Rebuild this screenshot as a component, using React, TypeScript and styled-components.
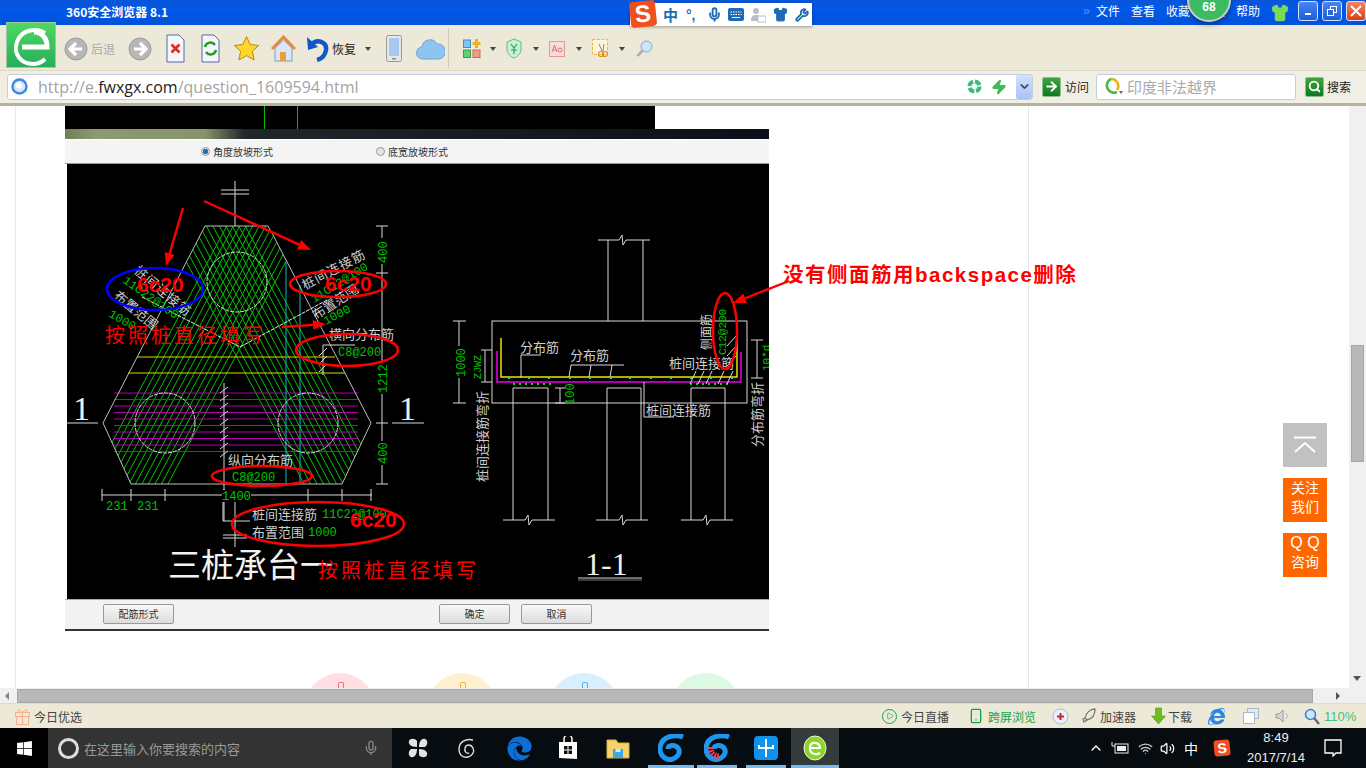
import React from 'react';
import styled, { createGlobalStyle } from 'styled-components';
import { FaWindows, FaEdge, FaInternetExplorer } from 'react-icons/fa';
import { Mic, Wifi, Volume2, ChevronUp, ChevronDown, Wrench, Shirt, Zap, Search, ArrowRight, Smartphone, Play } from 'lucide-react';

const CJK = '"Noto Sans CJK SC", "Liberation Sans", sans-serif';

const Global = createGlobalStyle`
  html, body { margin: 0; padding: 0; overflow: hidden; background: #fff; }
  * { box-sizing: border-box; }
  body { font-family: ${CJK}; font-size: 12px; }
`;

const Screen = styled.div`
  position: relative; width: 1366px; height: 768px; overflow: hidden;
  display: flex; flex-direction: column; background: #fff;
`;
const TitleBar = styled.div`
  height: 25px; flex: none; display: flex; align-items: center; padding-left: 66px;
  background: linear-gradient(#0a55d8 0, #0258e8 8px, #0052dc 100%); color: #fff;
`;
const TitleText = styled.div`font: bold 12px ${CJK}; flex: none; margin-top: -2px;`;
const MenuGroup = styled.div`margin-left: auto; display: flex; align-items: center; height: 25px;`;
const MenuChevron = styled.span`color: #5d8fe8; font: 13px "Liberation Sans", sans-serif; margin-right: 6px; margin-top: -4px;`;
const MenuItem = styled.span`font-size: 12px; width: 35px; flex: none; margin-top: -4px; white-space: nowrap;`;
const WinGroup = styled.div`display: flex; margin-left: 5px;`;
const WinButton = styled.div<{ $red?: boolean }>`
  width: 20px; height: 20px; margin-left: 4px; margin-top: -4px; border: 1px solid #d5e2fa; border-radius: 3px;
  background: ${p => p.$red ? 'linear-gradient(#f0855f,#d9401b)' : 'linear-gradient(#4c85ee,#1a5ddc)'};
  display: flex; align-items: center; justify-content: center;
`;
const ToolBar = styled.div`
  height: 45px; flex: none; background: #ece9d8; display: flex; align-items: center; padding-left: 64px;
`;
const ToolItem = styled.div<{ $w: number }>`
  width: ${p => p.$w}px; flex: none; display: flex; align-items: center; gap: 3px; height: 45px; padding-top: 2px;
`;
const ToolLabel = styled.span<{ $muted?: boolean }>`color: ${p => p.$muted ? '#aaa' : '#222'}; font-size: 12px; white-space: nowrap;`;
const Caret = styled.span<{ $ml: number }>`
  width: 0; height: 0; border-left: 3px solid transparent; border-right: 3px solid transparent;
  border-top: 4px solid #444; flex: none; margin-left: ${p => p.$ml}px;
`;
const ToolSep = styled.div`width: 1px; height: 40px; background: #cfcbb5; flex: none; margin: 0 14px 0 0;`;
const AddressBar = styled.div`
  height: 36px; flex: none; display: flex; align-items: center; padding: 0 0 1px 7px; background: #f1efe3;
  border-top: 1px solid #dcd8c4; border-bottom: 3px solid #b5b2a2;
`;
const UrlField = styled.div`
  width: 1026px; height: 26px; flex: none; background: #fff; border: 1px solid #c3cfe0; border-radius: 3px;
  display: flex; align-items: center; padding-left: 3px;
`;
const UrlText = styled.div`font: 16px "Open Sans", sans-serif; color: #a3a3a3; margin-left: 10px; white-space: nowrap;`;
const UrlHost = styled.span`color: #222;`;
const UrlTail = styled.div`margin-left: auto; display: flex; align-items: center; gap: 9px; height: 24px;`;
const UrlDrop = styled.div`
  width: 16px; height: 24px; background: linear-gradient(#d3e0fb,#a9c2f4); border-radius: 2px;
  display: flex; align-items: center; justify-content: center;
`;
const GreenSquare = styled.div`
  width: 19px; height: 20px; background: linear-gradient(#3da53d,#0c7a22); border-radius: 2px; border: 1px solid #8fbf8f;
  display: flex; align-items: center; justify-content: center; flex: none;
`;
const Visit = styled.div`margin-left: 9px; display: flex; align-items: center; gap: 4px; width: 54px; flex: none; color: #222;`;
const SearchField = styled.div`
  width: 200px; height: 26px; flex: none; background: #fff; border: 1px solid #c3cfe0; border-radius: 3px;
  display: flex; align-items: center; padding-left: 6px; color: #aaa; font-size: 15px;
`;
const SearchGo = styled.div`margin-left: 9px; display: flex; align-items: center; gap: 3px; color: #222;`;
const SearchHint = styled.span`margin-left: 2px; white-space: nowrap;`;
const Middle = styled.div`flex: 1; min-height: 0; display: flex;`;
const Viewport = styled.div`flex: 1; min-width: 0; position: relative; overflow: hidden;`;
const PageColumn = styled.div`
  margin-left: 15px; width: 1014px; height: 100%; border-left: 1px solid #e8e8e8; border-right: 1px solid #e8e8e8;
  padding-left: 49px;
`;
const Figure = styled.div`width: 704px;`;
const TopStrip = styled.div`
  width: 590px; height: 23px;
  background:
    linear-gradient(#00c000,#00c000) 199px 0 / 1px 100% no-repeat,
    linear-gradient(#00c000,#00c000) 232px 0 / 1px 100% no-repeat,
    #000;
`;
const BlurStrip = styled.div`
  height: 10px; background: linear-gradient(90deg,#6f7f58 0,#8b9a70 30px,#87946c 140px,#20262a 180px,#0b1018 100%);
`;
const DialogHead = styled.div`
  height: 25px; display: flex; align-items: center; background: #f4f4f4; border-top: 1px solid #fff; border-bottom: 1px solid #999;
  padding-left: 136px; color: #333; font-size: 10px;
`;
const RadioItem = styled.div<{ $w: number }>`width: ${p => p.$w}px; flex: none; display: flex; align-items: center; gap: 3px;`;
const Radio = styled.span<{ $on?: boolean }>`
  width: 9px; height: 9px; border-radius: 50%; border: 1px solid #999; flex: none;
  background: ${p => p.$on ? 'radial-gradient(#1e6fb0 0 2.5px,#dfe6ea 3px)' : '#e4e4e4'};
`;
const CadWrap = styled.div`padding-left: 2px; height: 435px; background: #fff;`;
const CadSvg = styled.svg`display: block; overflow: visible; background: #000;`;
const DialogFoot = styled.div`
  height: 32px; background: #f2f2f2; border-top: 1px solid #aaa; border-bottom: 2px solid #333;
  display: flex; align-items: center; padding: 0 0 2px 38px;
`;
const DlgBtn = styled.div<{ $ml?: number }>`
  width: 71px; height: 20px; margin-left: ${p => p.$ml ?? 0}px; flex: none; border: 1px solid #999; border-radius: 2px;
  background: linear-gradient(#f8f8f8,#dcdcdc); color: #333; font-size: 10px;
  display: flex; align-items: center; justify-content: center;
`;
const BlobRow = styled.div`display: flex; gap: 52px; margin: 42px 0 0 240px;`;
const Blob = styled.div<{ $c: string; $ic: string }>`
  width: 70px; height: 70px; border-radius: 50%; background: ${p => p.$c}; flex: none; position: relative;
  &::after { content: ''; position: absolute; left: 33px; top: 9px; width: 4px; height: 7px; border: 1px solid ${p => p.$ic}; border-bottom: 0; border-radius: 2px 2px 0 0; }
`;
const FloatStack = styled.div`
  position: absolute; left: 1283px; top: 423px; display: flex; flex-direction: column; gap: 11px;
`;
const FloatBtn = styled.div<{ $gray?: boolean }>`
  width: 44px; height: 44px; background: ${p => p.$gray ? '#c1c1c1' : '#fe6600'}; color: #fff;
  font-size: 14px; line-height: 19px; text-align: center; display: flex; align-items: center; justify-content: center;
  padding-bottom: ${p => p.$gray ? 0 : 6}px;
`;
const QLetters = styled.span`font: 16px "Liberation Sans", sans-serif; letter-spacing: 0;`;
const VScroll = styled.div`
  width: 17px; flex: none; background: #f0f0f0; position: relative;
`;
const VThumb = styled.div`
  position: absolute; left: 2px; top: 239px; width: 13px; height: 117px; background: #b8b8b8; border: 1px solid #a6a6a6;
`;
const ArrowDown = styled.span`
  position: absolute; left: 4px; top: 570px; width: 0; height: 0;
  border-left: 4px solid transparent; border-right: 4px solid transparent; border-top: 5px solid #555;
`;
const HScroll = styled.div`
  height: 16px; flex: none; background: #f0f0f0; display: flex; align-items: center; padding: 0 0 0 5px; border-bottom: 1px solid #dcdcdc;
`;
const HArrow = styled.span<{ $right?: boolean }>`
  width: 0; height: 0; flex: none; border-top: 4px solid transparent; border-bottom: 4px solid transparent;
  ${p => p.$right ? 'border-left: 4px solid #555; margin-left: 23px;' : 'border-right: 4px solid #888; margin-right: 8px;'}
`;
const HThumb = styled.div`width: 1296px; height: 14px; background: #b8b8b8; border: 1px solid #a6a6a6; flex: none;`;
const StatusBar = styled.div`
  height: 24px; flex: none; background: #ece9d8; display: flex; align-items: center; padding-left: 15px; color: #444; font-size: 12px;
`;
const StatusItem = styled.div<{ $ml?: number; $green?: boolean; $gap?: number }>`
  margin-left: ${p => p.$ml ?? 0}px; display: flex; align-items: center; gap: ${p => p.$gap ?? 4}px; flex: none;
  color: ${p => p.$green ? '#17a34a' : '#444'}; white-space: nowrap;
`;
const PlayRing = styled.span`
  width: 15px; height: 15px; border: 1px solid #17a34a; border-radius: 50%; display: flex; align-items: center; justify-content: center; flex: none;
`;
const Zoom = styled.span`color: #45c07a; font: 13px "Liberation Sans", sans-serif;`;
const Taskbar = styled.div`height: 40px; flex: none; background: #070c10; display: flex; align-items: stretch;`;
const StartBtn = styled.div`width: 48px; background: #000; display: flex; align-items: center; justify-content: center; flex: none;`;
const TaskSearch = styled.div`
  width: 344px; flex: none; background: #333; display: flex; align-items: center; padding-left: 10px; color: #999; font-size: 13px;
`;
const Cortana = styled.span`width: 21px; height: 21px; border-radius: 50%; border: 3px solid #ddd; flex: none; margin-right: 5px;`;
const TaskMic = styled.span`margin-left: auto; margin-right: 13px; display: flex; color: #888;`;
const TaskSlot = styled.div<{ $w: number; $ml?: number; $line?: boolean; $active?: boolean }>`
  width: ${p => p.$w}px; margin-left: ${p => p.$ml ?? 0}px; flex: none; display: flex; align-items: center; justify-content: center;
  background: ${p => p.$active ? '#353a3d' : 'transparent'};
  border-bottom: 3px solid ${p => p.$line ? '#76b9ed' : 'transparent'}; padding-top: 3px;
`;
const Tray = styled.div`margin-left: auto; display: flex; align-items: center; color: #fff; flex: none;`;
const TrayItem = styled.div<{ $w: number; $pr?: number }>`
  width: ${p => p.$w}px; padding-right: ${p => p.$pr ?? 0}px; flex: none; display: flex; justify-content: center; align-items: center; font-size: 14px;
`;
const TrayS = styled.span`
  width: 16px; height: 16px; background: #f0501e; border-radius: 3px; transform: rotate(-6deg);
  color: #fff; font: bold 14px/16px "Liberation Sans", sans-serif; text-align: center;
`;
const Clock = styled.div`width: 72px; text-align: center; font: 13px/20px "Liberation Sans", sans-serif; color: #eee; flex: none;`;
const Sogou = styled.div`
  position: absolute; left: 630px; top: 3px; width: 182px; height: 23px; background: #fff; box-shadow: 0 1px 3px rgba(0,0,0,.35);
  display: flex; align-items: center; color: #1e6cb5; padding-left: 33px;
`;
const SogouS = styled.span`
  position: absolute; left: 0; top: -2px; width: 26px; height: 26px; background: #f0501e; border-radius: 4px; transform: rotate(-6deg);
  color: #fff; font: bold 24px/26px "Liberation Sans", sans-serif; text-align: center;
`;
const SogouText = styled.span`font: bold 15px ${CJK}; width: 23px; flex: none;`;
const SogouPunct = styled.span`font: bold 14px "Liberation Sans", sans-serif; width: 17px; flex: none;`;
const SogouIcon = styled.span`width: 22px; flex: none; display: flex; justify-content: center;`;
const Badge = styled.div`
  position: absolute; left: 1187px; top: -22px; width: 44px; height: 44px; border-radius: 50%; background: #3dbb63;
  border: 2px solid #c9cfc9; color: #fff; font: bold 12px "Liberation Sans", sans-serif; display: flex; align-items: flex-end; justify-content: center; padding-bottom: 6px;
  box-shadow: 0 3px 5px rgba(0,0,0,.3);
`;
const Logo360Wrap = styled.div`position: absolute; left: 6px; top: 20px; line-height: 0;`;
const CText = styled.text<{ $c?: string; $s?: number; $b?: boolean; $mono?: boolean; $serif?: boolean; $ls?: number }>`
  fill: ${p => p.$c ?? '#cfcfcf'}; font-size: ${p => p.$s ?? 13}px; font-weight: ${p => p.$b ? 700 : 400};
  font-family: ${p => p.$mono ? '"Liberation Mono", monospace' : p.$serif ? '"Liberation Serif", serif' : p.$b ? '"Liberation Sans", "Noto Sans CJK SC", sans-serif' : CJK};
  letter-spacing: ${p => p.$ls ?? 0}px;
`;

const GR = '#00c400';
const RD = '#ff0000';
const WT = '#d8d8d8';

type TP = { x: number; y: number; r?: number; c?: string; s?: number; mono?: boolean; b?: boolean; serif?: boolean; ls?: number; children: React.ReactNode };
const T = ({ x, y, r, c, s, mono, b, serif, ls, children }: TP) => (
  <CText x={x} y={y} $c={c} $s={s} $mono={mono} $b={b} $serif={serif} $ls={ls} transform={r ? `rotate(${r} ${x} ${y})` : undefined}>{children}</CText>
);
const G = (p: Omit<TP, 'mono' | 'c'>) => <T {...p} mono c={GR} />;

const Hatch = () => {
  const ls: React.ReactNode[] = [];
  const slopes = [0.53, -0.53];
  slopes.forEach((m, i) => {
    for (let o = -40; o <= 40; o += 6.5) {
      const x = 237 + o;
      ls.push(<line key={`${i}${o}`} x1={x + (226 - 282) * m} y1={226} x2={x + (484 - 282) * m} y2={484} stroke={GR} strokeWidth={1} />);
    }
  });
  return <>{ls}</>;
};

const Red = ({ pts }: { pts: [number, number, number, number] }) => {
  const [a, b, c, d] = pts;
  const ang = Math.atan2(d - b, c - a);
  const h = 13, w = 5;
  const bx = c - h * Math.cos(ang), by = d - h * Math.sin(ang);
  const nx = -Math.sin(ang) * w, ny = Math.cos(ang) * w;
  return (
    <g>
      <line x1={a} y1={b} x2={bx} y2={by} stroke={RD} strokeWidth={2.4} />
      <polygon points={`${c},${d} ${bx + nx},${by + ny} ${bx - nx},${by - ny}`} fill={RD} />
    </g>
  );
};

const Break = ({ x1, x2, y, mid }: { x1: number; x2: number; y: number; mid: number }) => (
  <polyline points={`${x1},${y} ${mid - 3},${y} ${mid},${y - 5} ${mid + 1},${y + 5} ${mid + 4},${y} ${x2},${y}`} fill="none" stroke={WT} strokeWidth={1} />
);

const Cad = () => (
  <CadSvg width={702} height={435} viewBox="67 164 702 435">
    <defs>
      <clipPath id="hex"><polygon points="205,226 268,226 371,423 342,484 131,484 103,423" /></clipPath>
      <clipPath id="img"><rect x="67" y="164" width="702" height="435" /></clipPath>
    </defs>
    <g clipPath="url(#img)">
      <g clipPath="url(#hex)"><Hatch /></g>
      {[393, 399.5, 406, 412.5, 419, 425.5, 432, 438.5, 445, 451.5].map(y => (
        <line key={y} x1={114} y1={y} x2={358} y2={y} stroke="#b000b0" strokeWidth={1} />
      ))}
      <line x1={137} y1={357} x2={335} y2={357} stroke="#d8d800" />
      <line x1={128} y1={373} x2={345} y2={373} stroke="#d8d800" />
      <line x1={286} y1={262} x2={286} y2={484} stroke="#00c0c8" />
      <line x1={300} y1={285} x2={300} y2={484} stroke="#00c0c8" />
      <polygon points="205,226 268,226 273,235 371,423 342,484 131,484 103,423" fill="none" stroke="#bdbdbd" />
      <circle cx={237} cy={282} r={30} fill="none" stroke={WT} strokeDasharray="4 1" />
      <circle cx={165} cy={423} r={30} fill="none" stroke={WT} strokeDasharray="4 1" />
      <circle cx={308} cy={423} r={30} fill="none" stroke={WT} strokeDasharray="4 1" />
      <polyline points="142,297 240,347 327,300" fill="none" stroke="#eee" strokeDasharray="4 1" />
      <line x1={235} y1={181} x2={235} y2={226} stroke={WT} />
      <line x1={221} y1={190} x2={249} y2={190} stroke={WT} /><line x1={221} y1={194} x2={249} y2={194} stroke={WT} />
      <line x1={224} y1={383} x2={224} y2={521} stroke={WT} />
      {[390, 398, 406, 414, 422, 430, 438, 446, 454].map(y => <line key={y} x1={220} y1={y + 3} x2={228} y2={y - 3} stroke={WT} />)}
      <line x1={102} y1={495} x2={372} y2={495} stroke={WT} />
      {[102, 131, 165, 224, 308, 342, 371].map(x => <line key={x} x1={x} y1={489} x2={x} y2={501} stroke={WT} />)}
      <G x={106} y={510} s={12}>231</G>
      <G x={137} y={510} s={12}>231</G>
      <rect x={222} y={490} width={29} height={12} fill="#000" />
      <G x={222} y={500} s={12}>1400</G>
      <polyline points="223,502 223,521 250,521" fill="none" stroke={WT} />
      <line x1={235} y1={502} x2={235} y2={547} stroke={WT} />
      <line x1={223} y1={535} x2={247} y2={535} stroke={WT} /><line x1={223} y1={538} x2={247} y2={538} stroke={WT} />
      <line x1={382} y1={226} x2={382} y2={484} stroke={WT} />
      {[226, 273, 423, 484].map(y => <line key={y} x1={376} y1={y} x2={388} y2={y} stroke={WT} />)}
      <rect x={376} y={238} width={12} height={26} fill="#000" />
      <G x={387} y={263} r={-90} s={12}>400</G>
      <rect x={376} y={362} width={12} height={32} fill="#000" />
      <G x={387} y={393} r={-90} s={12}>1212</G>
      <rect x={376} y={441} width={12} height={24} fill="#000" />
      <G x={387} y={464} r={-90} s={12}>400</G>
      <line x1={67} y1={423} x2={98} y2={423} stroke={WT} />
      <line x1={392} y1={423} x2={424} y2={423} stroke={WT} />
      <T x={73} y={420} s={34} serif c="#eee">1</T>
      <T x={399} y={420} s={34} serif c="#eee">1</T>

      <T x={133} y={272} r={40} s={13} ls={1}>桩间连接筋</T>
      <G x={122} y={282} r={35} s={12}>11C22@100</G>
      <T x={113} y={297} r={40} s={13}>布置范围</T>
      <G x={108} y={316} r={30} s={12}>1000</G>
      <T x={305} y={290} r={-28} s={13} ls={1}>桩间连接筋</T>
      <G x={314} y={303} r={-32} s={12}>11C22@100</G>
      <T x={316} y={320} r={-33} s={13}>布置范围</T>
      <G x={326} y={325} r={-28} s={12}>1000</G>
      <T x={329} y={339} s={13}>横向分布筋</T>
      <polyline points="355,345 323,345 323,375" fill="none" stroke={WT} />
      {[352, 360, 368].map(y => <line key={y} x1={319} y1={y + 4} x2={327} y2={y - 4} stroke={WT} />)}
      <G x={338} y={356} s={12}>C8@200</G>
      <T x={228} y={465} s={13}>纵向分布筋</T>
      <G x={232} y={481} s={12}>C8@200</G>
      <T x={252} y={519} s={13}>桩间连接筋</T>
      <G x={322} y={518} s={12}>11C22@100</G>
      <T x={252} y={537} s={13}>布置范围</T>
      <G x={308} y={536} s={12}>1000</G>
      <T x={168} y={577} s={33} c="#f2f2f2">三桩承台一</T>
      <T x={585} y={575} s={32} serif c="#eee">1-1</T>
      <line x1={578} y1={578} x2={642} y2={578} stroke={WT} /><line x1={578} y1={580} x2={642} y2={580} stroke="#777" />

      <line x1={608} y1={240} x2={608} y2={321} stroke={WT} /><line x1={643} y1={240} x2={643} y2={321} stroke={WT} />
      <Break x1={598} x2={650} y={240} mid={622} />
      <rect x={492} y={321} width={255} height={82} fill="none" stroke={WT} />
      {[[513, 548, 503, 555, 528], [607, 641, 596, 648, 622], [691, 725, 681, 733, 706]].map(([a, b, c, d, m]) => (
        <g key={a}>
          <line x1={a} y1={388} x2={a} y2={520} stroke={WT} /><line x1={b} y1={388} x2={b} y2={520} stroke={WT} />
          <line x1={a} y1={388} x2={b} y2={388} stroke={WT} />
          <Break x1={c} x2={d} y={520} mid={m} />
        </g>
      ))}
      <polyline points="501,338 501,377 737,377 737,333" fill="none" stroke="#e8e800" strokeWidth={1.5} />
      <polyline points="497,351 497,382 741,382 741,352" fill="none" stroke="#e800e8" strokeWidth={1.5} />
      {[508, 528, 548, 569, 589, 610, 629, 650, 670, 690, 710, 731].map(x => <rect key={x} x={x} y={377} width={2} height={2} fill="#00e0e0" />)}
      {[513, 519, 525, 531, 537, 543, 549, 690, 696, 702, 708, 714, 720, 726].map(x => <rect key={x} x={x} y={383} width={2} height={2} fill="#00e000" />)}
      <line x1={459} y1={321} x2={459} y2={403} stroke={WT} />
      <line x1={453} y1={321} x2={466} y2={321} stroke={WT} /><line x1={453} y1={403} x2={466} y2={403} stroke={WT} />
      <rect x={453} y={346} width={13} height={32} fill="#000" />
      <G x={465} y={377} r={-90} s={12}>1000</G>
      <G x={481} y={379} r={-90} s={10}>ZJWZ</G>
      <line x1={485} y1={350} x2={485} y2={382} stroke={WT} />
      <line x1={481} y1={350} x2={492} y2={350} stroke={WT} /><line x1={481} y1={382} x2={492} y2={382} stroke={WT} />
      <T x={487} y={482} r={-90} s={13}>桩间连接筋弯折</T>
      <T x={520} y={352} s={13}>分布筋</T>
      <polyline points="541,355 521,355 521,378" fill="none" stroke={WT} />
      <T x={570} y={360} s={13}>分布筋</T>
      <polyline points="624,365 571,365 569,377" fill="none" stroke={WT} />
      <line x1={591} y1={365} x2={589} y2={377} stroke={WT} /><line x1={612} y1={365} x2={610} y2={377} stroke={WT} />
      <T x={669} y={368} s={13}>桩间连接筋</T>
      {[690, 698, 706, 718, 727].map(x => <line key={x} x1={x} y1={384} x2={x + 6} y2={371} stroke={WT} />)}
      <T x={711} y={350} r={-90} s={12}>侧面筋</T>
      <G x={726} y={355} r={-90} s={11}>C12@200</G>
      {[340, 350, 360].map(y => <line key={y} x1={727} y1={y + 6} x2={736} y2={y - 4} stroke={WT} />)}
      <T x={646} y={415} s={13}>桩间连接筋</T>
      <polyline points="644,382 644,417 674,417" fill="none" stroke={WT} />
      <G x={574} y={405} r={-90} s={12}>100</G>
      <line x1={560} y1={388} x2={560} y2={403} stroke={WT} />
      <line x1={555} y1={388} x2={565} y2={388} stroke={WT} /><line x1={555} y1={403} x2={565} y2={403} stroke={WT} />
      <line x1={757} y1={340} x2={757} y2={378} stroke={WT} />
      <line x1={751} y1={340} x2={763} y2={340} stroke={WT} /><line x1={751} y1={378} x2={763} y2={378} stroke={WT} />
      <G x={770} y={371} r={-90} s={11}>10*d</G>
      <T x={762} y={447} r={-90} s={13}>分布筋弯折</T>
    </g>

    <ellipse cx={155} cy={289} rx={48} ry={21} fill="none" stroke="#0000ff" strokeWidth={2.5} />
    <ellipse cx={338} cy={284} rx={48} ry={13} fill="none" stroke={RD} strokeWidth={2.5} />
    <ellipse cx={347} cy={350} rx={51} ry={16} fill="none" stroke={RD} strokeWidth={2.5} />
    <ellipse cx={262} cy={476} rx={50} ry={10} fill="none" stroke={RD} strokeWidth={2.5} />
    <ellipse cx={318} cy={524} rx={86} ry={22} fill="none" stroke={RD} strokeWidth={2.5} />
    <ellipse cx={725} cy={331} rx={12} ry={38} fill="none" stroke={RD} strokeWidth={2.5} />
    <T x={137} y={292} s={21} b c={RD}>6c20</T>
    <T x={325} y={291} s={21} b c={RD}>6c20</T>
    <T x={350} y={527} s={21} b c={RD}>6c20</T>
    <T x={105} y={343} s={20} c={RD} ls={3}>按照桩直径填写</T>
    <T x={318} y={578} s={20} c={RD} ls={3}>按照桩直径填写</T>
    <Red pts={[183, 208, 166, 266]} />
    <Red pts={[204, 201, 311, 250]} />
    <Red pts={[282, 327, 326, 324]} />
    <Red pts={[789, 281, 733, 303]} />
    <T x={783} y={282} s={20.5} b c={RD} ls={1.5}>没有侧面筋用backspace删除</T>
  </CadSvg>
);

const Logo360 = ({ s = 50 }: { s?: number }) => (
  <svg width={s} height={s} viewBox="0 0 50 46">
    <defs><linearGradient id="lg" x1="0" y1="0" x2="0" y2="1"><stop offset="0" stopColor="#4fd95f" /><stop offset="1" stopColor="#27ad5c" /></linearGradient></defs>
    <rect x=".5" y=".5" width="49" height="45" fill="url(#lg)" stroke="#9fc7a5" />
    <path d="M39 11C30 5 15 8 11 20c-4 12 4 22 16 22 5 0 9-2 12-5" fill="none" stroke="#fff" strokeWidth="4" />
    <path d="M16 25h25c0-10-6-15-13-15" fill="none" stroke="#fff" strokeWidth="5" />
  </svg>
);
const NavCircle = ({ left }: { left?: boolean }) => (
  <svg width="24" height="24" viewBox="0 0 24 24">
    <circle cx="12" cy="12" r="11" fill="#b7b7b7" stroke="#9a9a9a" />
    <path d={left ? 'M18 12H8M12 6l-6 6 6 6' : 'M6 12h10M12 6l6 6-6 6'} fill="none" stroke="#fff" strokeWidth="3.2" />
  </svg>
);
const DocIcon = ({ kind }: { kind: 'x' | 'r' }) => (
  <svg width="19" height="29" viewBox="0 0 19 29">
    <path d="M1 1h12l5 5v22H1z" fill="#f4f6fc" stroke="#5a66a8" />
    {kind === 'x'
      ? <path d="M5.500 10.500l8 8m0-8l-8 8" stroke="#e02a1a" strokeWidth="2.6" />
      : <g fill="none" stroke="#1ea01e" strokeWidth="2.4"><path d="M4 13a5.500 5.500 0 0 1 10-2" /><path d="M15 16a5.500 5.500 0 0 1-10 2" /></g>}
  </svg>
);
const Star = () => (
  <svg width="27" height="27" viewBox="0 0 27 27"><path d="M13.500 1.500l3.700 8 8.500 1-6.300 5.800 1.700 8.700-7.600-4.400L5.900 25l1.700-8.700L1.300 10.500l8.500-1z" fill="#ffd52e" stroke="#b78a12" /></svg>
);
const Home = () => (
  <svg width="25" height="27" viewBox="0 0 25 27">
    <path d="M4 13v13h17V13L12.500 5z" fill="#dbe7f8" stroke="#7f9bc4" />
    <path d="M1 14L12.500 2 24 14" fill="none" stroke="#e58b3c" strokeWidth="3" />
    <rect x="9" y="17" width="6" height="9" fill="#e5a23c" />
  </svg>
);
const Undo = () => (
  <svg width="23" height="26" viewBox="0 0 23 26">
    <path d="M5 9c6-7 16-3 15 5-1 6-5 9-9 10" fill="none" stroke="#1158c7" strokeWidth="4.500" />
    <path d="M1 1l1 13 10-3z" fill="#1158c7" />
  </svg>
);
const Phone = () => (
  <svg width="16" height="27" viewBox="0 0 16 27">
    <rect x=".5" y=".5" width="15" height="26" rx="2" fill="#e6e6e6" stroke="#999" />
    <rect x="3" y="3" width="10" height="18" fill="#a9c8f0" />
    <rect x="6" y="23" width="4" height="1.500" fill="#888" />
  </svg>
);
const Cloud = () => (
  <svg width="29" height="22" viewBox="0 0 29 22">
    <path d="M7 21a6 6 0 0 1-1-12 8 8 0 0 1 15-3 7.500 7.500 0 0 1 2 15z" fill="#8fc3f0" stroke="#6fa6da" />
  </svg>
);
const Grid4 = () => (
  <svg width="18" height="20" viewBox="0 0 18 20">
    <rect x=".5" y="1" width="7" height="7.500" fill="#7dc4f4" stroke="#3f8fd0" />
    <rect x=".5" y="11" width="7" height="7.500" fill="#5ed07a" stroke="#2fa050" />
    <rect x="10" y="11" width="7" height="7.500" fill="#f29a86" stroke="#d8664f" />
    <path d="M13.500 0v9M9.500 4.500h8" stroke="#f0b020" strokeWidth="3" />
  </svg>
);
const Shield = () => (
  <svg width="16" height="21" viewBox="0 0 16 21">
    <path d="M8 1l7 3v7c0 5-4 8-7 9-3-1-7-4-7-9V4z" fill="#c9f0d6" stroke="#5cc080" />
    <path d="M5 6l3 4 3-4M8 10v6M5 12h6" fill="none" stroke="#2f9e5a" strokeWidth="1.200" />
  </svg>
);
const AaBox = () => (
  <svg width="16" height="16" viewBox="0 0 16 16">
    <rect x=".5" y=".5" width="15" height="15" fill="#fbdcdc" stroke="#e09a9a" />
    <path d="M3 11l2.500-7L8 11M4 9h3" fill="none" stroke="#c77" />
    <circle cx="11" cy="9" r="2" fill="none" stroke="#c77" />
  </svg>
);
const Snip = () => (
  <svg width="16" height="19" viewBox="0 0 16 19">
    <rect x=".5" y=".5" width="15" height="15" fill="#fdf5d8" stroke="#e8b64a" strokeDasharray="3 1.500" />
    <circle cx="9" cy="15" r="2.500" fill="none" stroke="#e08a20" strokeWidth="1.200" /><circle cx="13" cy="15" r="2.500" fill="none" stroke="#e08a20" strokeWidth="1.200" />
    <path d="M7 5l3 7M12 5l-1 7" stroke="#888" />
  </svg>
);
const Lens = () => (
  <svg width="17" height="18" viewBox="0 0 17 18">
    <circle cx="10.500" cy="6.500" r="5.500" fill="#cfe4f8" stroke="#7ea6cc" />
    <path d="M6.500 10.500L1.500 16" stroke="#aaa" strokeWidth="2.500" />
  </svg>
);
const Globe = () => (
  <svg width="17" height="17" viewBox="0 0 17 17">
    <circle cx="8.500" cy="8.500" r="7" fill="#d6e8fb" stroke="#3f8ae0" strokeWidth="2.400" />
    <circle cx="8" cy="7.500" r="3" fill="#fff" />
  </svg>
);
const Aperture = () => (
  <svg width="15" height="15" viewBox="0 0 15 15">
    <circle cx="7.500" cy="7.500" r="5" fill="none" stroke="#3dbb7a" strokeWidth="4" strokeDasharray="6 1.800" />
  </svg>
);
const QRing = () => (
  <svg width="22" height="20" viewBox="0 0 22 20">
    <path d="M8 2a7 7 0 0 1 6 11" fill="none" stroke="#f0b010" strokeWidth="2.600" />
    <path d="M14 15A7 7 0 1 1 8 2" fill="none" stroke="#4cb848" strokeWidth="2.600" />
    <path d="M16 14l4 0-2 3z" fill="#666" />
  </svg>
);
const Gift = () => (
  <svg width="15" height="17" viewBox="0 0 15 17">
    <g fill="none" stroke="#f6b18c"><rect x=".5" y="4.500" width="14" height="4" /><rect x="1.500" y="8.500" width="12" height="8" /><path d="M7.500 4.500v12M7.500 4.500C5 1 2 1 3.500 4.500M7.500 4.500C10 1 13 1 11.500 4.500" /></g>
  </svg>
);
const PlusCircle = () => (
  <svg width="17" height="17" viewBox="0 0 17 17">
    <circle cx="8.500" cy="8.500" r="7.500" fill="#eaf0fa" stroke="#a8bcd8" />
    <path d="M8.500 5v7M5 8.500h7" stroke="#d02030" strokeWidth="2" />
  </svg>
);
const Rocket = () => (
  <svg width="14" height="16" viewBox="0 0 14 16">
    <path d="M13 1C8 1 4 5 3 10l2 2c5-1 8-5 8-11zM3 10l-2 1 1 3 3-2" fill="none" stroke="#777" strokeWidth="1.300" />
  </svg>
);
const DownArrow = () => (
  <svg width="15" height="18" viewBox="0 0 15 18"><path d="M4.500 1h6v8h4l-7 8-7-8h4z" fill="#6ebd1e" stroke="#4d9a12" strokeWidth=".6" /></svg>
);
const Windows2 = () => (
  <svg width="16" height="16" viewBox="0 0 16 16">
    <rect x="4.500" y=".5" width="11" height="10" fill="#dfe9f5" stroke="#a9b9cc" />
    <rect x=".5" y="4.500" width="11" height="11" fill="#fff" stroke="#a9b9cc" />
  </svg>
);
const Speaker = () => (
  <svg width="16" height="16" viewBox="0 0 16 16">
    <path d="M1 6h3l4-4v12l-4-4H1z" fill="#d5d5d5" stroke="#9a9a9a" />
    <path d="M11 5c1.500 2 1.500 4 0 6" fill="none" stroke="#9bc" />
  </svg>
);
const ZoomLens = () => (
  <svg width="16" height="17" viewBox="0 0 16 17">
    <circle cx="6.500" cy="6.500" r="5" fill="#cfe4fa" stroke="#3f85d0" strokeWidth="1.600" />
    <path d="M10 10l5 6" stroke="#667" strokeWidth="2.400" />
  </svg>
);
const Pinwheel = () => (
  <svg width="22" height="22" viewBox="0 0 22 22" fill="#e2e2e2">
    <path d="M10 10C4 10 1 7 2 4s6-3 8 0zM12 10c0-6 3-9 6-8s3 6 0 8zM12 12c6 0 9 3 8 6s-6 3-8 0zM10 12c0 6-3 9-6 8s-3-6 0-8z" />
  </svg>
);
const Spiral = () => (
  <svg width="20" height="22" viewBox="0 0 20 22">
    <path d="M16 3C9 1 2 5 2 12s5 9 9 8 7-5 5-9-7-4-8 0 2 6 4 5" fill="none" stroke="#ddd" strokeWidth="1.400" />
  </svg>
);
const StoreIcon = () => (
  <svg width="22" height="24" viewBox="0 0 22 24">
    <path d="M2 6h18v17l-18-1z" fill="#fff" />
    <path d="M7 6V3a4 4 0 0 1 8 0v3" fill="none" stroke="#fff" strokeWidth="1.500" />
    <path d="M7 10h3.500v3.500H7zM11.500 10H15v3.500h-3.500zM7 14.500h3.500V18H7zM11.500 14.500H15V18h-3.500z" fill="#111" />
  </svg>
);
const Folder = () => (
  <svg width="24" height="22" viewBox="0 0 24 22">
    <path d="M1 3h9l2 3h11v15H1z" fill="#f6d36a" stroke="#dcae3c" />
    <rect x="7" y="12" width="10" height="9" fill="#3aa7e6" />
    <rect x="9.500" y="12" width="5" height="3" fill="#cfe9f8" />
  </svg>
);
const Swirl = ({ red }: { red?: boolean }) => (
  <svg width="26" height="28" viewBox="0 0 26 28">
    <path d="M25 3c-8-3-22-1-23 11-.5 9 8 13 13 11s8-7 5-11-10-3-10 1" fill="none" stroke="#1e96ef" strokeWidth="5" />
    {red && <path d="M7 13c-1 6 4 10 9 9" fill="none" stroke="#e0465a" strokeWidth="6" strokeDasharray="2 1" />}
  </svg>
);
const BlueCross = () => (
  <svg width="24" height="24" viewBox="0 0 24 24">
    <rect width="24" height="24" rx="4" fill="#0f92ee" />
    <path d="M12 3v18M5 9v3h14V9" fill="none" stroke="#fff" strokeWidth="2" />
  </svg>
);
const EColor = () => (
  <svg width="24" height="26" viewBox="0 0 24 26">
    <ellipse cx="12" cy="13" rx="11" ry="12" fill="#8cd32c" stroke="#eaf7d8" />
    <path d="M7 13h10c0-6-9-7-10-1s5 9 10 6" fill="none" stroke="#fff" strokeWidth="2.200" />
  </svg>
);
const Battery = () => (
  <svg width="18" height="16" viewBox="0 0 18 16">
    <rect x="4" y="4" width="13" height="9" fill="none" stroke="#eee" />
    <rect x="6" y="6" width="9" height="5" fill="#eee" />
    <path d="M1 2v4h3" fill="none" stroke="#eee" />
  </svg>
);
const Note = () => (
  <svg width="18" height="18" viewBox="0 0 18 18"><path d="M1 1h16v13h-5l-3 3v-3H1z" fill="none" stroke="#fff" strokeWidth="1.300" /></svg>
);
const BackTop = () => (
  <svg width="24" height="18" viewBox="0 0 24 18"><path d="M1 1.500h22M2 16l10-9 10 9" fill="none" stroke="#fff" strokeWidth="2" /></svg>
);
const KeyboardIcon = () => (
  <svg width="16" height="13" viewBox="0 0 16 13">
    <rect width="16" height="13" rx="2" fill="#1e6cb5" />
    <path d="M2.500 4h11M2.500 6.500h11" stroke="#fff" strokeDasharray="1.500 1" /><path d="M4 9.500h8" stroke="#fff" />
  </svg>
);
const UserFaded = () => (
  <svg width="16" height="16" viewBox="0 0 16 16">
    <circle cx="6" cy="4" r="3" fill="#b5c0cc" /><path d="M1 14c0-5 2-6 5-6s4 1 4 6z" fill="#b5c0cc" />
    <rect x="8" y="9" width="8" height="6" fill="#fff" stroke="#b5c0cc" />
  </svg>
);

export default function App() {
  return (
    <Screen>
      <Global />
      <TitleBar>
        <TitleText>360安全浏览器 8.1</TitleText>
        <MenuGroup>
          <MenuChevron>»</MenuChevron>
          <MenuItem>文件</MenuItem>
          <MenuItem>查看</MenuItem>
          <MenuItem>收藏</MenuItem>
          <MenuItem>工具</MenuItem>
          <MenuItem>帮助</MenuItem>
          <Shirt size={18} color="#7ed957" fill="#7ed957" />
          <WinGroup>
            <WinButton><svg width="10" height="10"><rect x="2" y="7" width="6" height="2" fill="#fff" /></svg></WinButton>
            <WinButton><svg width="12" height="12"><g fill="none" stroke="#fff"><rect x="4.500" y="1.500" width="6" height="6" /><rect x="1.500" y="4.500" width="6" height="6" fill="#2a66dd" /></g></svg></WinButton>
            <WinButton $red><svg width="12" height="12"><path d="M1 1l10 10M11 1L1 11" stroke="#fff" strokeWidth="2" /></svg></WinButton>
          </WinGroup>
        </MenuGroup>
      </TitleBar>
      <ToolBar>
        <ToolItem $w={64}><NavCircle left /><ToolLabel $muted>后退</ToolLabel></ToolItem>
        <ToolItem $w={38}><NavCircle /></ToolItem>
        <ToolItem $w={35}><DocIcon kind="x" /></ToolItem>
        <ToolItem $w={32}><DocIcon kind="r" /></ToolItem>
        <ToolItem $w={38}><Star /></ToolItem>
        <ToolItem $w={35}><Home /></ToolItem>
        <ToolItem $w={80}><Undo /><ToolLabel>恢复</ToolLabel><Caret $ml={6} /></ToolItem>
        <ToolItem $w={30}><Phone /></ToolItem>
        <ToolItem $w={32}><Cloud /></ToolItem>
        <ToolSep />
        <ToolItem $w={43}><Grid4 /><Caret $ml={6} /></ToolItem>
        <ToolItem $w={43}><Shield /><Caret $ml={8} /></ToolItem>
        <ToolItem $w={43}><AaBox /><Caret $ml={8} /></ToolItem>
        <ToolItem $w={44}><Snip /><Caret $ml={8} /></ToolItem>
        <ToolItem $w={20}><Lens /></ToolItem>
      </ToolBar>
      <AddressBar>
        <UrlField>
          <Globe />
          <UrlText>http://e.<UrlHost>fwxgx.com</UrlHost>/question_1609594.html</UrlText>
          <UrlTail>
            <Aperture />
            <Zap size={16} color="#3dbb55" fill="#3dbb55" />
            <UrlDrop><ChevronDown size={13} color="#445" strokeWidth={3} /></UrlDrop>
          </UrlTail>
        </UrlField>
        <Visit>
          <GreenSquare><ArrowRight size={15} color="#fff" strokeWidth={3} /></GreenSquare>
          <span>访问</span>
        </Visit>
        <SearchField>
          <QRing />
          <SearchHint>印度非法越界</SearchHint>
        </SearchField>
        <SearchGo>
          <GreenSquare><Search size={13} color="#fff" strokeWidth={3.500} /></GreenSquare>
          <span>搜索</span>
        </SearchGo>
      </AddressBar>
      <Middle>
        <Viewport>
          <PageColumn>
            <Figure>
              <TopStrip />
              <BlurStrip />
              <DialogHead>
                <RadioItem $w={175}><Radio $on />角度放坡形式</RadioItem>
                <RadioItem $w={90}><Radio />底宽放坡形式</RadioItem>
              </DialogHead>
              <CadWrap><Cad /></CadWrap>
              <DialogFoot>
                <DlgBtn>配筋形式</DlgBtn>
                <DlgBtn $ml={265}>确定</DlgBtn>
                <DlgBtn $ml={11}>取消</DlgBtn>
              </DialogFoot>
            </Figure>
            <BlobRow>
              <Blob $c="#ffdfe4" $ic="#f2697f" />
              <Blob $c="#fff1cf" $ic="#f0b040" />
              <Blob $c="#d8efff" $ic="#5aaee8" />
              <Blob $c="#dcf9e4" $ic="#dcf9e4" />
            </BlobRow>
          </PageColumn>
        </Viewport>
        <VScroll><VThumb /><ArrowDown /></VScroll>
      </Middle>
      <HScroll>
        <HArrow />
        <HThumb />
        <HArrow $right />
      </HScroll>
      <StatusBar>
        <Gift />
        <StatusItem $ml={4}>今日优选</StatusItem>
        <StatusItem $ml={800}><PlayRing><Play size={8} color="#17a34a" /></PlayRing>今日直播</StatusItem>
        <StatusItem $ml={19} $green><Smartphone size={16} color="#17a34a" />跨屏浏览</StatusItem>
        <StatusItem $ml={16}><PlusCircle /></StatusItem>
        <StatusItem $ml={13}><Rocket />加速器</StatusItem>
        <StatusItem $ml={15} $gap={2}><DownArrow />下载</StatusItem>
        <StatusItem $ml={16}><FaInternetExplorer size={17} color="#2a8ae0" /></StatusItem>
        <StatusItem $ml={18}><Windows2 /></StatusItem>
        <StatusItem $ml={16}><Speaker /></StatusItem>
        <StatusItem $ml={13}><ZoomLens /><Zoom>110%</Zoom></StatusItem>
      </StatusBar>
      <Taskbar>
        <StartBtn><FaWindows size={17} color="#fff" /></StartBtn>
        <TaskSearch>
          <Cortana />
          在这里输入你要搜索的内容
          <TaskMic><Mic size={16} /></TaskMic>
        </TaskSearch>
        <TaskSlot $w={51}><Pinwheel /></TaskSlot>
        <TaskSlot $w={47}><Spiral /></TaskSlot>
        <TaskSlot $w={58}><FaEdge size={25} color="#0a6fd8" /></TaskSlot>
        <TaskSlot $w={40}><StoreIcon /></TaskSlot>
        <TaskSlot $w={60}><Folder /></TaskSlot>
        <TaskSlot $w={46} $line><Swirl /></TaskSlot>
        <TaskSlot $w={40} $ml={3} $line><Swirl red /></TaskSlot>
        <TaskSlot $w={40} $ml={9} $line><BlueCross /></TaskSlot>
        <TaskSlot $w={48} $ml={5} $line $active><EColor /></TaskSlot>
        <Tray>
          <TrayItem $w={20}><ChevronUp size={16} /></TrayItem>
          <TrayItem $w={28}><Battery /></TrayItem>
          <TrayItem $w={22}><Wifi size={15} color="#ccc" /></TrayItem>
          <TrayItem $w={22}><Volume2 size={15} /></TrayItem>
          <TrayItem $w={26}>中</TrayItem>
          <TrayItem $w={36}><TrayS>S</TrayS></TrayItem>
          <Clock>8:49<br />2017/7/14</Clock>
          <TrayItem $w={54} $pr={12}><Note /></TrayItem>
        </Tray>
      </Taskbar>

      <Logo360Wrap><Logo360 /></Logo360Wrap>
      <Badge>68</Badge>
      <Sogou>
        <SogouS>S</SogouS>
        <SogouText>中</SogouText>
        <SogouPunct>°,</SogouPunct>
        <SogouIcon><Mic size={15} strokeWidth={3} /></SogouIcon>
        <SogouIcon><KeyboardIcon /></SogouIcon>
        <SogouIcon><UserFaded /></SogouIcon>
        <SogouIcon><Shirt size={15} fill="#1e6cb5" /></SogouIcon>
        <SogouIcon><Wrench size={14} strokeWidth={3} /></SogouIcon>
      </Sogou>
      <FloatStack>
        <FloatBtn $gray><BackTop /></FloatBtn>
        <FloatBtn>关注<br />我们</FloatBtn>
        <FloatBtn><span><QLetters>Q Q</QLetters><br />咨询</span></FloatBtn>
      </FloatStack>
    </Screen>
  );
}
